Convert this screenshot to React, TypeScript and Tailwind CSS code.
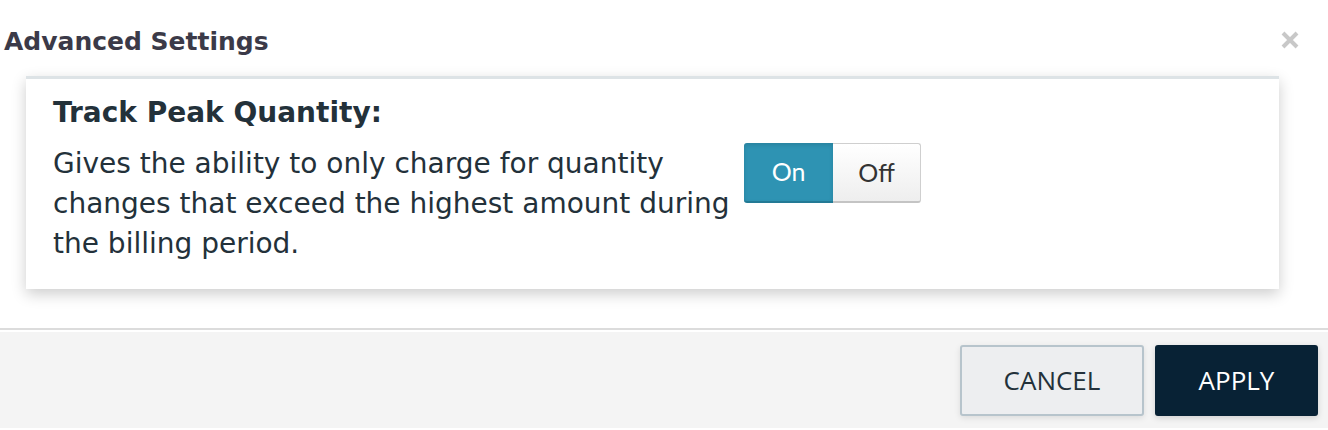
import React from "react";

export default function App() {
  return (
    <div className="w-[1328px] h-[430px] bg-white overflow-hidden flex flex-col">
      <div className="h-[76px] flex items-start justify-between">
        <h1 className="pl-[4px] pt-[24px] text-[25px] leading-[36px] font-bold text-[#3b3a48] [font-family:Verdana,'DejaVu_Sans',sans-serif]">
          Advanced Settings
        </h1>
        <button className="mt-[31px] mr-[29px] w-[18px] h-[18px]" aria-label="Close">
          <svg width="18" height="18" viewBox="0 0 18 18">
            <path d="M2 2 L16 16 M16 2 L2 16" stroke="#c8c8c8" strokeWidth="4" strokeLinecap="butt" />
          </svg>
        </button>
      </div>
      <div className="h-[252px] px-[26px] pr-[49px]">
        <div className="bg-white border-t-[3px] border-[#dde3e6] shadow-[0_5px_14px_rgba(0,0,0,0.2)] h-[213px] pl-[27px] pt-[18px]">
          <div className="text-[#23313a] [font-family:Verdana,'DejaVu_Sans',sans-serif]">
            <div className="text-[28px] font-bold leading-[32px]">Track Peak Quantity:</div>
            <div className="flex items-start mt-[15px]">
              <p className="w-[686px] text-[28px] leading-[40px]">
                Gives the ability to only charge for quantity changes that exceed the highest amount during the billing period.
              </p>
              <div className="ml-[5px] -mt-[1px] flex [font-family:Lato,'Liberation_Sans',sans-serif] text-[25px]">
                <button className="w-[89px] h-[60px] bg-[#2e93b3] text-white rounded-l-[3px] border-b-[2px] border-[#237a95] shadow-[inset_0_2px_4px_rgba(0,0,0,0.12)]">
                  On
                </button>
                <button className="w-[88px] h-[60px] bg-gradient-to-b from-white to-[#eeeeee] text-[#333] rounded-r-[3px] border border-l-0 border-[#cfcfcf] border-b-[2px] border-b-[#c4c4c4]">
                  Off
                </button>
              </div>
            </div>
          </div>
        </div>
      </div>
      <div className="border-t-[2px] border-[#dcdcdc] pt-[2px]">
        <div className="h-[96px] bg-[#f4f4f4] flex items-center justify-end pr-[10px] gap-[11px] [font-family:'Open_Sans',sans-serif] text-[26px]">
          <button className="w-[184px] h-[71px] bg-[#edeef0] border-[2px] border-[#b7c4cc] rounded-[3px] text-[#23313a] shadow-[0_2px_6px_rgba(0,0,0,0.1)]">
            CANCEL
          </button>
          <button className="w-[163px] h-[71px] bg-[#082235] rounded-[3px] text-white shadow-[0_2px_6px_rgba(0,0,0,0.15)]">
            APPLY
          </button>
        </div>
      </div>
    </div>
  );
}
